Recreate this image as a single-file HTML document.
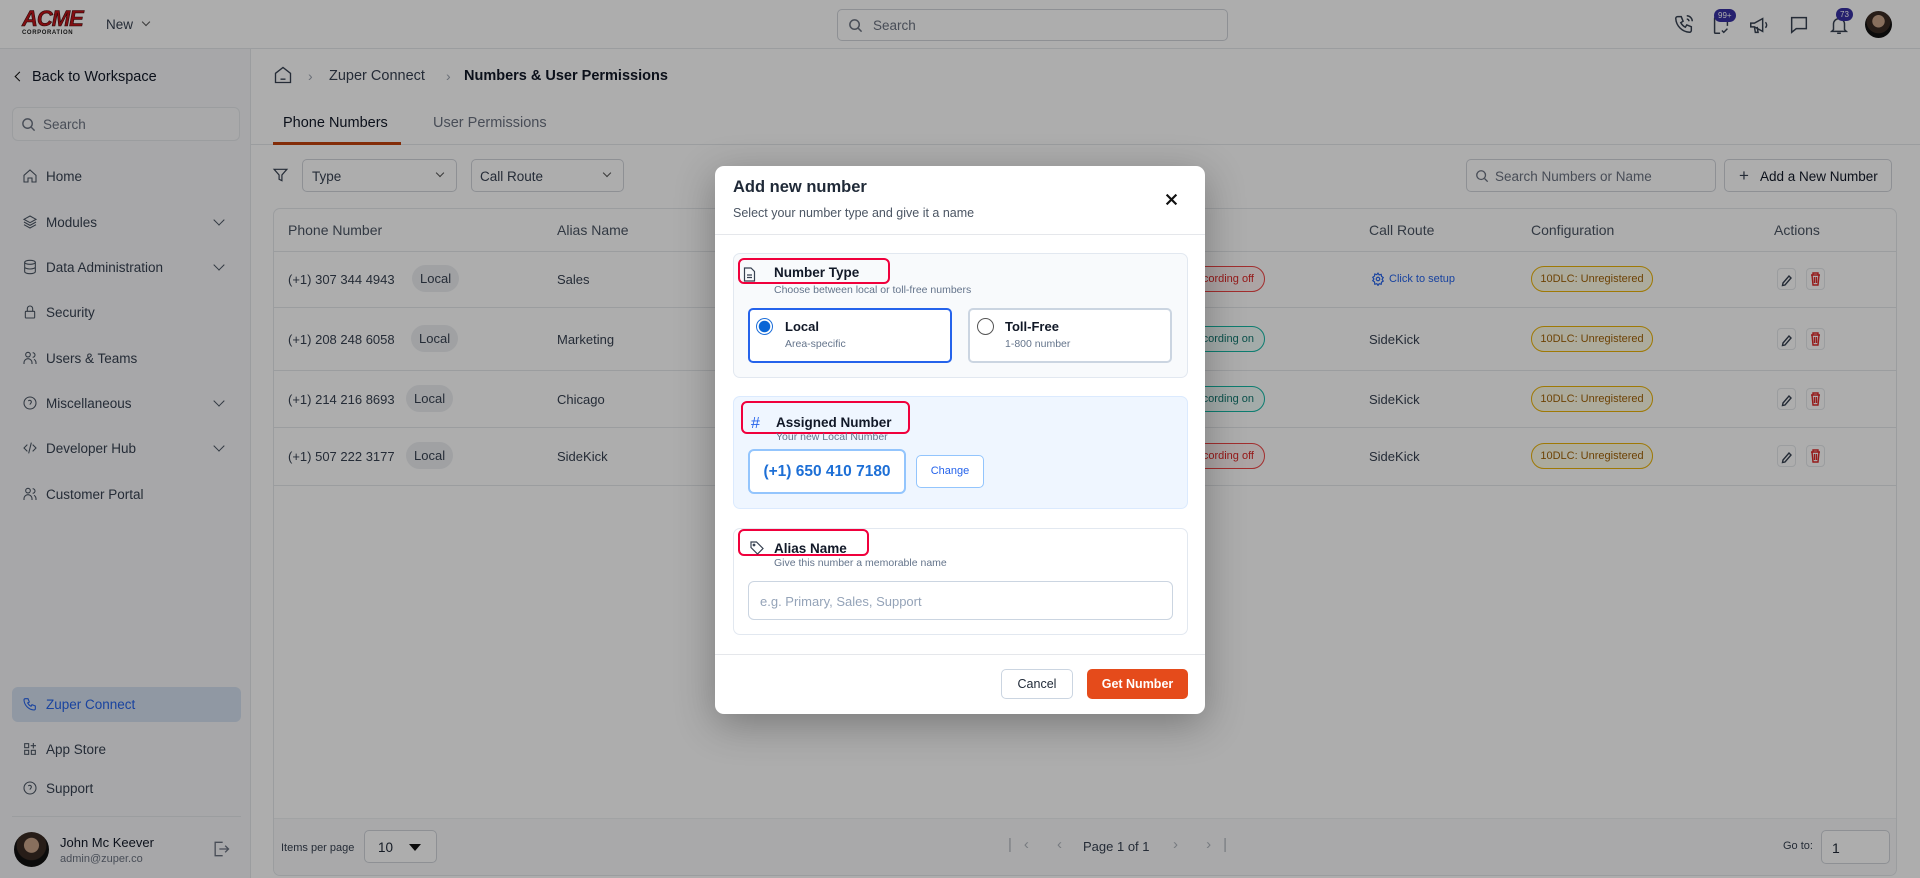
<!DOCTYPE html>
<html><head><meta charset="utf-8">
<style>
*{box-sizing:border-box;margin:0;padding:0}
body{width:1920px;height:878px;overflow:hidden;font-family:"Liberation Sans",Arial,sans-serif;color:#1f2937;background:#fff;position:relative}
.a{position:absolute}
.top{left:0;top:0;width:1920px;height:49px;border-bottom:1px solid #e5e7eb;background:#fff}
.side{left:0;top:49px;width:251px;height:829px;background:#f6f7f9;border-right:1px solid #e5e7eb}
.mi{position:absolute;left:22px;font-size:13.5px;color:#374151;display:flex;align-items:center;gap:8px}
.mi svg{width:16px;height:16px;stroke:#4b5563;fill:none;stroke-width:1.6}
.chev{position:absolute;left:215px;width:8px;height:8px;border-right:1.6px solid #4b5563;border-bottom:1.6px solid #4b5563;transform:rotate(45deg)}
.th{position:absolute;top:222px;font-size:14px;color:#4b5563}
.row{position:absolute;left:274px;width:1622px;border-top:1px solid #e5e7eb}
.cell{position:absolute;font-size:13px;color:#374151}
.loc{position:absolute;background:#eceef1;border-radius:14px;font-size:13px;padding:6px 8px;color:#374151}
.cfg{position:absolute;left:1531px;width:122px;height:26px;border:1.5px solid #eab308;border-radius:13px;background:#fefce8;color:#a16207;font-size:11px;text-align:center;line-height:24px}
.rec{position:absolute;left:1170px;width:95px;height:26px;border-radius:13px;font-size:11px;line-height:24px;text-align:right;padding-right:10px}
.off{border:1.5px solid #ef4444;color:#dc2626;background:#fef2f2}
.on{border:1.5px solid #14b8a6;color:#0f766e;background:#f0fdfa}
.ab{position:absolute;width:19px;height:22px;border:1px solid #e5e7eb;border-radius:4px;background:#fff}
.ov{left:0;top:0;width:1920px;height:878px;background:rgba(0,0,0,0.32)}
.modal{left:715px;top:166px;width:490px;height:548px;background:#fff;border-radius:9px;box-shadow:0 10px 40px rgba(0,0,0,.3)}
.red{position:absolute;border:2.5px solid #f0003c;border-radius:6px}
.sec{position:absolute;left:18px;width:455px;border:1px solid #e2e8f0;border-radius:7px}
.h{position:absolute;font-size:13.5px;font-weight:bold;color:#111827}
.s{position:absolute;font-size:10.5px;color:#64748b}
</style></head><body>

<div class="a top">
  <div class="a" style="left:22px;top:9px;width:64px;height:30px">
    <div style="font:900 italic 22px 'Liberation Sans';color:#c0161b;letter-spacing:-1px;line-height:20px;-webkit-text-stroke:.6px #3b0a0a">ACME</div>
    <div style="font:bold 6px 'Liberation Sans';color:#222;letter-spacing:.6px;margin-top:1px">CORPORATION</div>
  </div>
  <div class="a" style="left:106px;top:17px;font-size:13.5px;color:#374151">New</div>
  <div class="a" style="left:143px;top:19px;width:6px;height:6px;border-right:1.5px solid #555;border-bottom:1.5px solid #555;transform:rotate(45deg)"></div>
  <div class="a" style="left:837px;top:9px;width:391px;height:32px;border:1px solid #d1d5db;border-radius:5px">
    <svg class="a" style="left:10px;top:8px" width="15" height="15" viewBox="0 0 16 16" fill="none" stroke="#6b7280" stroke-width="1.6"><circle cx="7" cy="7" r="5"/><path d="M11 11l3.5 3.5"/></svg>
    <div class="a" style="left:35px;top:8px;font-size:13.5px;color:#6b7280">Search</div>
  </div>
  <svg class="a" style="left:1673px;top:13px" width="22" height="22" viewBox="0 0 24 24" fill="none" stroke="#374151" stroke-width="1.6"><path d="M5 4h4l2 5-2.5 1.5a11 11 0 005 5L15 13l5 2v4a2 2 0 01-2 2A16 16 0 013 6a2 2 0 012-2"/><path d="M15 3a6 6 0 016 6M15 6.5a3 3 0 012.5 2.5"/></svg>
  <svg class="a" style="left:1710px;top:14px" width="22" height="22" viewBox="0 0 24 24" fill="none" stroke="#374151" stroke-width="1.6"><path d="M9 4H6a1 1 0 00-1 1v15a1 1 0 001 1h5M15 4h3a1 1 0 011 1v8"/><path d="M13 18l2 2 4-4"/></svg>
  <div class="a" style="left:1714px;top:9px;background:#3730a3;color:#fff;font-size:8px;border-radius:8px;padding:2px 4px">99+</div>
  <svg class="a" style="left:1748px;top:14px" width="22" height="22" viewBox="0 0 24 24" fill="none" stroke="#374151" stroke-width="1.6"><path d="M3 10v4h4l9 5V5L7 10H3zM7 14l1 6h3l-1-6"/><path d="M19 9a4 4 0 010 6"/></svg>
  <svg class="a" style="left:1788px;top:14px" width="22" height="22" viewBox="0 0 24 24" fill="none" stroke="#374151" stroke-width="1.6"><path d="M4 4h16v12H9l-5 4z"/><path d="M9 10h.01M12 10h.01M15 10h.01"/></svg>
  <svg class="a" style="left:1828px;top:14px" width="22" height="22" viewBox="0 0 24 24" fill="none" stroke="#374151" stroke-width="1.6"><path d="M6 17V11a6 6 0 0112 0v6l2 2H4zM10 21h4"/></svg>
  <div class="a" style="left:1836px;top:8px;background:#3730a3;color:#fff;font-size:8px;border-radius:8px;padding:2px 4px">73</div>
  <div class="a" style="left:1865px;top:11px;width:27px;height:27px;border-radius:50%;background:radial-gradient(circle at 50% 38%,#c9a48a 0 28%,#3a2c24 30% 55%,#111 57%)"></div>
</div>

<div class="a side">
  <div class="a" style="left:16px;top:24px;width:7px;height:7px;border-left:1.6px solid #111;border-bottom:1.6px solid #111;transform:rotate(45deg)"></div>
  <div class="a" style="left:32px;top:20px;font-size:14.5px;color:#111827">Back to Workspace</div>
  <div class="a" style="left:12px;top:58px;width:228px;height:34px;border:1px solid #e5e7eb;border-radius:6px;background:#f9fafb">
    <svg class="a" style="left:8px;top:9px" width="15" height="15" viewBox="0 0 16 16" fill="none" stroke="#6b7280" stroke-width="1.5"><circle cx="7" cy="7" r="5"/><path d="M11 11l3.5 3.5"/></svg>
    <div class="a" style="left:30px;top:9px;font-size:13.5px;color:#6b7280">Search</div>
  </div>
  <div class="mi" style="top:119px"><svg viewBox="0 0 24 24"><path d="M3 11l9-8 9 8v10h-6v-6H9v6H3z"/></svg>Home</div>
  <div class="mi" style="top:165px"><svg viewBox="0 0 24 24"><path d="M12 3l9 5-9 5-9-5zM3 12l9 5 9-5M3 16l9 5 9-5"/></svg>Modules</div><div class="chev" style="top:167px"></div>
  <div class="mi" style="top:210px"><svg viewBox="0 0 24 24"><ellipse cx="12" cy="5" rx="8" ry="3"/><path d="M4 5v14c0 1.7 3.6 3 8 3s8-1.3 8-3V5M4 12c0 1.7 3.6 3 8 3s8-1.3 8-3"/></svg>Data Administration</div><div class="chev" style="top:212px"></div>
  <div class="mi" style="top:255px"><svg viewBox="0 0 24 24"><rect x="5" y="11" width="14" height="10" rx="1"/><path d="M8 11V7a4 4 0 018 0v4"/></svg>Security</div>
  <div class="mi" style="top:301px"><svg viewBox="0 0 24 24"><circle cx="9" cy="7" r="3.5"/><path d="M3 21v-2a6 6 0 0112 0v2M16 4a3.5 3.5 0 010 7M21 21v-2a6 6 0 00-3-5"/></svg>Users &amp; Teams</div>
  <div class="mi" style="top:346px"><svg viewBox="0 0 24 24"><circle cx="12" cy="12" r="9"/><path d="M9.5 9a2.5 2.5 0 014.5 1.5c0 2-2 2-2 4M12 17h.01"/></svg>Miscellaneous</div><div class="chev" style="top:348px"></div>
  <div class="mi" style="top:391px"><svg viewBox="0 0 24 24"><path d="M8 7l-5 5 5 5M16 7l5 5-5 5M14 4l-4 16"/></svg>Developer Hub</div><div class="chev" style="top:393px"></div>
  <div class="mi" style="top:437px"><svg viewBox="0 0 24 24"><circle cx="9" cy="7" r="3.5"/><path d="M3 21v-2a6 6 0 0112 0v2M16 4a3.5 3.5 0 010 7M21 21v-2a6 6 0 00-3-5"/></svg>Customer Portal</div>
  <div class="a" style="left:12px;top:638px;width:229px;height:35px;background:#d4e0f0;border-radius:6px"></div>
  <div class="mi" style="top:647px;color:#2563eb"><svg viewBox="0 0 24 24" style="stroke:#2563eb"><path d="M5 4h4l2 5-2.5 1.5a11 11 0 005 5L15 13l5 2v4a2 2 0 01-2 2A16 16 0 013 6a2 2 0 012-2"/></svg>Zuper Connect</div>
  <div class="mi" style="top:692px"><svg viewBox="0 0 24 24"><rect x="4" y="4" width="6" height="6"/><rect x="4" y="14" width="6" height="6"/><rect x="14" y="14" width="6" height="6"/><path d="M17 3v8M13 7h8"/></svg>App Store</div>
  <div class="mi" style="top:731px"><svg viewBox="0 0 24 24"><circle cx="12" cy="12" r="9"/><path d="M9.5 9a2.5 2.5 0 014.5 1.5c0 2-2 2-2 4M12 17h.01"/></svg>Support</div>
  <div class="a" style="left:12px;top:767px;width:229px;height:1px;background:#e5e7eb"></div>
  <div class="a" style="left:14px;top:783px;width:35px;height:35px;border-radius:50%;background:radial-gradient(circle at 50% 38%,#c9a48a 0 26%,#3a2c24 28% 52%,#111 55%)"></div>
  <div class="a" style="left:60px;top:786px;font-size:13px;color:#111827">John Mc Keever</div>
  <div class="a" style="left:60px;top:804px;font-size:11px;color:#6b7280">admin@zuper.co</div>
  <svg class="a" style="left:211px;top:790px" width="20" height="20" viewBox="0 0 24 24" fill="none" stroke="#6b7280" stroke-width="1.6"><path d="M14 4H5v16h9M10 12h11M17 8l4 4-4 4"/></svg>
</div>

<svg class="a" style="left:273px;top:65px" width="20" height="20" viewBox="0 0 24 24" fill="none" stroke="#374151" stroke-width="1.6"><path d="M3 10l9-7 9 7v11H3z"/><path d="M9 17h6"/></svg>
<div class="a" style="left:308px;top:68px;font-size:14px;color:#9ca3af">›</div>
<div class="a" style="left:329px;top:68px;font-size:14.5px;color:#374151">Zuper Connect</div>
<div class="a" style="left:446px;top:68px;font-size:14px;color:#9ca3af">›</div>
<div class="a" style="left:464px;top:68px;font-size:14.5px;color:#111827;font-weight:bold">Numbers &amp; User Permissions</div>
<div class="a" style="left:283px;top:115px;font-size:14.5px;color:#111827">Phone Numbers</div>
<div class="a" style="left:433px;top:115px;font-size:14.5px;color:#6b7280">User Permissions</div>
<div class="a" style="left:251px;top:144px;width:1669px;height:1px;background:#e5e7eb"></div>
<div class="a" style="left:273px;top:142px;width:128px;height:3px;background:#c2410c"></div>
<svg class="a" style="left:272px;top:166px" width="17" height="18" viewBox="0 0 24 24" fill="none" stroke="#374151" stroke-width="1.7"><path d="M3 4h18l-7 8v8l-4-2v-6z"/></svg>
<div class="a" style="left:302px;top:159px;width:155px;height:33px;border:1px solid #d1d5db;border-radius:5px"><div class="a" style="left:9px;top:9px;font-size:13.5px;color:#374151">Type</div><div class="a" style="left:134px;top:10px;width:6px;height:6px;border-right:1.5px solid #555;border-bottom:1.5px solid #555;transform:rotate(45deg)"></div></div>
<div class="a" style="left:471px;top:159px;width:153px;height:33px;border:1px solid #d1d5db;border-radius:5px"><div class="a" style="left:8px;top:9px;font-size:13.5px;color:#374151">Call Route</div><div class="a" style="left:132px;top:10px;width:6px;height:6px;border-right:1.5px solid #555;border-bottom:1.5px solid #555;transform:rotate(45deg)"></div></div>
<div class="a" style="left:1466px;top:159px;width:250px;height:33px;border:1px solid #d1d5db;border-radius:5px"><svg class="a" style="left:8px;top:9px" width="14" height="14" viewBox="0 0 16 16" fill="none" stroke="#6b7280" stroke-width="1.5"><circle cx="7" cy="7" r="5"/><path d="M11 11l3.5 3.5"/></svg><div class="a" style="left:28px;top:9px;font-size:13.5px;color:#6b7280">Search Numbers or Name</div></div>
<div class="a" style="left:1724px;top:159px;width:168px;height:33px;border:1px solid #d1d5db;border-radius:5px"><div class="a" style="left:14px;top:6px;font-size:17px;color:#374151">+</div><div class="a" style="left:35px;top:9px;font-size:13.5px;color:#111827">Add a New Number</div></div>

<div class="a" style="left:273px;top:208px;width:1624px;height:668px;border:1px solid #e5e7eb;border-radius:7px"></div>
<div class="th" style="left:288px">Phone Number</div>
<div class="th" style="left:557px">Alias Name</div>
<div class="th" style="left:1369px">Call Route</div>
<div class="th" style="left:1531px">Configuration</div>
<div class="th" style="left:1774px">Actions</div>
<div class="row" style="top:251px"></div><div class="row" style="top:307px"></div><div class="row" style="top:370px"></div><div class="row" style="top:427px"></div><div class="row" style="top:485px"></div>

<div class="cell" style="left:288px;top:272px">(+1) 307 344 4943</div><div class="loc" style="left:412px;top:265px">Local</div><div class="cell" style="left:557px;top:272px">Sales</div>
<div class="cell" style="left:288px;top:332px">(+1) 208 248 6058</div><div class="loc" style="left:411px;top:325px">Local</div><div class="cell" style="left:557px;top:332px">Marketing</div>
<div class="cell" style="left:288px;top:392px">(+1) 214 216 8693</div><div class="loc" style="left:406px;top:385px">Local</div><div class="cell" style="left:557px;top:392px">Chicago</div>
<div class="cell" style="left:288px;top:449px">(+1) 507 222 3177</div><div class="loc" style="left:406px;top:442px">Local</div><div class="cell" style="left:557px;top:449px">SideKick</div>

<div class="rec off" style="top:266px">Recording off</div>
<div class="rec on" style="top:326px">Recording on</div>
<div class="rec on" style="top:386px">Recording on</div>
<div class="rec off" style="top:443px">Recording off</div>

<svg class="a" style="left:1371px;top:272px" width="14" height="14" viewBox="0 0 24 24" fill="none" stroke="#2563eb" stroke-width="2"><circle cx="12" cy="12" r="3"/><path d="M12 2l2 3 3.5-1 .5 3.5 3 2-2 3 2 3-3 2-.5 3.5-3.5-1-2 3-2-3-3.5 1L6 17l-3-2 2-3-2-3 3-2 .5-3.5 3.5 1z"/></svg>
<div class="cell" style="left:1389px;top:273px;font-size:11px;color:#2563eb">Click to setup</div>
<div class="cell" style="left:1369px;top:332px">SideKick</div>
<div class="cell" style="left:1369px;top:392px">SideKick</div>
<div class="cell" style="left:1369px;top:449px">SideKick</div>

<div class="cfg" style="top:266px">10DLC: Unregistered</div>
<div class="cfg" style="top:326px">10DLC: Unregistered</div>
<div class="cfg" style="top:386px">10DLC: Unregistered</div>
<div class="cfg" style="top:443px">10DLC: Unregistered</div>

<div class="ab" style="left:1777px;top:268px"></div><div class="ab" style="left:1806px;top:268px"></div>
<div class="ab" style="left:1777px;top:328px"></div><div class="ab" style="left:1806px;top:328px"></div>
<div class="ab" style="left:1777px;top:388px"></div><div class="ab" style="left:1806px;top:388px"></div>
<div class="ab" style="left:1777px;top:445px"></div><div class="ab" style="left:1806px;top:445px"></div>
<svg class="a" style="left:1777px;top:268px" width="19" height="200" viewBox="0 0 19 200" fill="none" stroke="#374151" stroke-width="1.4"><path d="M6 15l6-7 2 2-6 7-2.5.5z"/><path d="M6 75l6-7 2 2-6 7-2.5.5z"/><path d="M6 135l6-7 2 2-6 7-2.5.5z"/><path d="M6 192l6-7 2 2-6 7-2.5.5z"/></svg>
<svg class="a" style="left:1806px;top:268px" width="19" height="200" viewBox="0 0 19 200" fill="none" stroke="#dc2626" stroke-width="1.4"><path d="M5 7h9M7 7V5h5v2M6 7l1 10h5l1-10M8.5 9v6M10.5 9v6"/><path d="M5 67h9M7 67v-2h5v2M6 67l1 10h5l1-10M8.5 69v6M10.5 69v6"/><path d="M5 127h9M7 127v-2h5v2M6 127l1 10h5l1-10M8.5 129v6M10.5 129v6"/><path d="M5 184h9M7 184v-2h5v2M6 184l1 10h5l1-10M8.5 186v6M10.5 186v6"/></svg>

<div class="a" style="left:274px;top:818px;width:1622px;height:57px;background:#f9fafb;border-top:1px solid #eef0f2;border-radius:0 0 7px 7px"></div>
<div class="a" style="left:281px;top:842px;font-size:11px;color:#374151">Items per page</div>
<div class="a" style="left:364px;top:830px;width:73px;height:33px;border:1px solid #d1d5db;border-radius:5px;background:#fff"><div class="a" style="left:13px;top:9px;font-size:13.5px">10</div><div class="a" style="left:44px;top:13px;border-left:6px solid transparent;border-right:6px solid transparent;border-top:7px solid #111"></div></div>
<div class="a" style="left:1008px;top:836px;font-size:15px;color:#b0b5bd;letter-spacing:12px">|‹ ‹</div>
<div class="a" style="left:1083px;top:839px;font-size:13px;color:#374151">Page 1 of 1</div>
<div class="a" style="left:1173px;top:836px;font-size:15px;color:#b0b5bd;letter-spacing:12px">› ›|</div>
<div class="a" style="left:1783px;top:840px;font-size:11px;color:#374151">Go to:</div>
<div class="a" style="left:1821px;top:830px;width:69px;height:34px;border:1px solid #d1d5db;border-radius:5px;background:#fff"><div class="a" style="left:10px;top:9px;font-size:14px">1</div></div>

<div class="a ov"></div>

<div class="a modal">
  <div class="a" style="left:18px;top:12px;font-size:16.5px;font-weight:bold;color:#1f2937">Add new number</div>
  <div class="a" style="left:18px;top:40px;font-size:12.5px;color:#4b5563">Select your number type and give it a name</div>
  <svg class="a" style="left:450px;top:27px" width="13" height="13" viewBox="0 0 12 12" stroke="#111" stroke-width="2"><path d="M1.5 1.5l9 9M10.5 1.5l-9 9"/></svg>
  <div class="a" style="left:0;top:68px;width:490px;height:1px;background:#e5e7eb"></div>

  <div class="sec" style="top:87px;height:125px;background:#f8fafc"></div>
  <div class="red" style="left:23px;top:92px;width:152px;height:26px"></div>
  <svg class="a" style="left:28px;top:101px" width="13" height="15" viewBox="0 0 13 15" fill="none" stroke="#374151" stroke-width="1.2"><path d="M1.5 1h6.5l3.5 3.5v9.5h-10z"/><path d="M4 8h5M4 10.5h5"/></svg>
  <div class="h" style="left:59px;top:99px">Number Type</div>
  <div class="s" style="left:59px;top:118px">Choose between local or toll-free numbers</div>
  <div class="a" style="left:33px;top:142px;width:204px;height:55px;border:2px solid #2563eb;border-radius:5px;background:#fff"></div>
  <div class="a" style="left:41px;top:152px;width:17px;height:17px;border-radius:50%;border:1.5px solid #1e6fd9;background:radial-gradient(circle,#0a66d6 0 5.5px,#fff 6px)"></div>
  <div class="h" style="left:70px;top:153px;font-size:13px">Local</div>
  <div class="s" style="left:70px;top:172px">Area-specific</div>
  <div class="a" style="left:253px;top:142px;width:204px;height:55px;border:2px solid #cbd5e1;border-radius:5px;background:#fff"></div>
  <div class="a" style="left:262px;top:152px;width:17px;height:17px;border-radius:50%;border:1.5px solid #555"></div>
  <div class="h" style="left:290px;top:153px;font-size:13px">Toll-Free</div>
  <div class="s" style="left:290px;top:172px">1-800 number</div>

  <div class="sec" style="top:230px;height:113px;background:#eff6ff;border-color:#dbeafe"></div>
  <div class="red" style="left:26px;top:235px;width:169px;height:33px"></div>
  <div class="a" style="left:36px;top:249px;font-size:16px;color:#2563eb">#</div>
  <div class="h" style="left:61px;top:249px">Assigned Number</div>
  <div class="s" style="left:61px;top:265px">Your new Local Number</div>
  <div class="a" style="left:33px;top:283px;width:158px;height:45px;border:2px solid #93c5fd;border-radius:6px;background:#fff;text-align:center;line-height:41px;font-size:15.5px;font-weight:bold;color:#1d6fd6">(+1) 650 410 7180</div>
  <div class="a" style="left:201px;top:289px;width:68px;height:33px;border:1.5px solid #93c5fd;border-radius:5px;background:#fff;text-align:center;line-height:30px;font-size:11px;color:#2563eb">Change</div>

  <div class="sec" style="top:362px;height:107px;background:#fff"></div>
  <div class="red" style="left:23px;top:363px;width:131px;height:27px"></div>
  <svg class="a" style="left:35px;top:375px" width="14" height="14" viewBox="0 0 14 14" fill="none" stroke="#374151" stroke-width="1.2"><path d="M1 2.5V1h5.5l6.5 6.5-5.5 5.5L1 6.5z"/><circle cx="4" cy="4" r="0.8"/></svg>
  <div class="h" style="left:59px;top:375px">Alias Name</div>
  <div class="s" style="left:59px;top:391px">Give this number a memorable name</div>
  <div class="a" style="left:33px;top:415px;width:425px;height:39px;border:1px solid #cbd5e1;border-radius:6px"><div class="a" style="left:11px;top:12px;font-size:13px;color:#94a3b8">e.g. Primary, Sales, Support</div></div>

  <div class="a" style="left:0;top:488px;width:490px;height:1px;background:#e5e7eb"></div>
  <div class="a" style="left:286px;top:503px;width:72px;height:30px;border:1px solid #cbd5e1;border-radius:5px;text-align:center;line-height:28px;font-size:12.5px;color:#1f2937">Cancel</div>
  <div class="a" style="left:372px;top:503px;width:101px;height:30px;background:#e54b1b;border-radius:5px;text-align:center;line-height:30px;font-size:12.5px;font-weight:bold;color:#fff">Get Number</div>
</div>
</body></html>
